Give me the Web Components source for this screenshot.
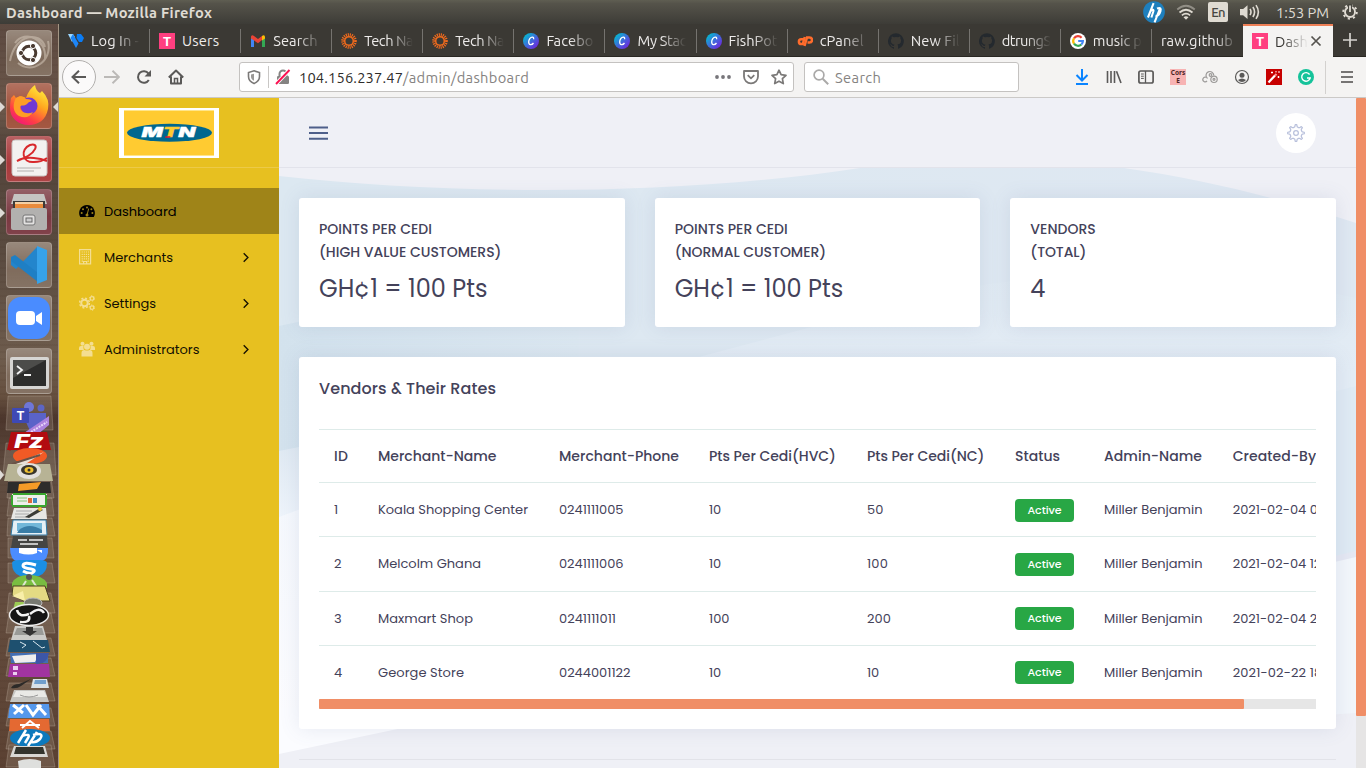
<!DOCTYPE html>
<html lang="en">
<head>
<meta charset="utf-8">
<title>Dashboard</title>
<style>
html,body{margin:0;height:100%;overflow:hidden;background:#eff0f5}
</style>
</head>
<body>
<desktop-shell></desktop-shell>
<script>
// Registers an element whose shadow root is built from a markup function.
function define(name, render) {
  customElements.define(name, class extends HTMLElement {
    connectedCallback() {
      if (this.shadowRoot) return;
      this.attachShadow({ mode: 'open' }).innerHTML = render(this);
    }
  });
}

// A run of text set to a fixed advance width through its tracking.
const runs = [];
customElements.define('text-run', class extends HTMLElement {
  connectedCallback() {
    if (this.shadowRoot) return;
    this.attachShadow({ mode: 'open' }).innerHTML =
      '<style>:host{display:inline-block;white-space:nowrap}</style><slot></slot>';
    runs.push(this);
  }
  fit() {
    const target = parseFloat(this.getAttribute('w'));
    if (!target) return;
    const n = this.textContent.length;
    this.style.letterSpacing = (target - this.getBoundingClientRect().width) / Math.max(1, n - .5) + 'px';
  }
});

// Outline of an eight-toothed gear centred in a 16-unit box.
const gearPath = (() => {
  const pts = [];
  for (let i = 0; i < 8; i++) {
    for (const [off, r] of [[-.30, 5.3], [-.16, 5.7], [-.08, 7.4], [.08, 7.4], [.16, 5.7], [.30, 5.3]]) {
      const a = i * Math.PI / 4 + off * 1.15;
      pts.push((8 + r * Math.sin(a)).toFixed(2) + ' ' + (8 - r * Math.cos(a)).toFixed(2));
    }
  }
  return 'M' + pts.join('L') + 'z';
})();

const ICONS = {
  vultr: '<path d="M0 1h5l2 3-3 5z" fill="#9bd7ff"/><path d="M2.500 5L5 1l5.500 9.500L8 15z" fill="#1d86f7"/><path d="M9 1h4l3 4-2 4h-3L8.500 5z" fill="#0a7cf5"/>',
  t: '<rect width="16" height="16" fill="#ff3f80"/><text x="8" y="12.700" text-anchor="middle" font-family="Roboto,sans-serif" font-size="13" font-weight="700" fill="#fff">T</text>',
  gmail: '<path d="M1 14V4l3 2.200V14z" fill="#4285f4"/><path d="M12 14V6.200L15 4v10z" fill="#34a853"/><path d="M1 3.500Q2 1.500 4 3l4 3 4-3v4L8 10.200 1 5.500z" fill="#ea4335"/><path d="M12 3q2-1.500 3 .5v2l-3 2z" fill="#fbbc04"/>',
  sun: '<circle cx="8" cy="8" r="4.300" fill="none" stroke="#f26b1d" stroke-width="1.500"/><circle cx="8" cy="8" r="6.300" fill="none" stroke="#f26b1d" stroke-width="3" stroke-dasharray="1.100 .88"/>',
  canva: '<defs><linearGradient id="g" x1="0" y1="0" x2="1" y2="1"><stop offset=".15" stop-color="#09b3d0"/><stop offset=".55" stop-color="#4463dc"/><stop offset="1" stop-color="#7d12dd"/></linearGradient></defs><circle cx="8" cy="8" r="8" fill="url(#g)"/><path d="M10.500 6.300q.6-1.900-1.100-2.200C7.300 4 5.700 6.700 5.700 9c0 3.300 3 3.500 4.800 1" fill="none" stroke="#fff" stroke-width="1.300"/>',
  cpanel: '<g fill="none" stroke="#ff6c2c" stroke-width="2.500"><path d="M6.500 6.300H4.300a2.400 2.400 0 0 0 0 4.800h1.500L7.800 4"/><path d="M7.500 13 10 4.500h2.500a2.400 2.400 0 0 1 0 5H10.500"/></g>',
  github: '<path fill="#24292e" d="M8 .2a8 8 0 0 0-2.500 15.600c.4 0 .5-.2.500-.4v-1.500c-2.200.5-2.700-1-2.700-1-.4-.9-.9-1.200-.9-1.200-.7-.5.100-.5.100-.5.800.1 1.200.8 1.200.8.700 1.300 1.900.9 2.300.7.100-.5.300-.9.500-1.100-1.800-.2-3.600-.9-3.600-4 0-.9.300-1.600.8-2.100-.1-.2-.4-1 .1-2.100 0 0 .7-.2 2.200.8a7.600 7.600 0 0 1 4 0c1.500-1 2.200-.8 2.200-.8.400 1.100.2 1.900.1 2.100.5.600.8 1.300.8 2.100 0 3.100-1.900 3.700-3.700 4 .3.200.6.700.6 1.500v2.200c0 .2.100.5.600.4A8 8 0 0 0 8 .2z"/>',
  google: '<circle cx="8" cy="8" r="8" fill="#fff"/><g fill="none" stroke-width="2.200"><path d="M4 5.300A4.900 4.900 0 0 1 11.600 4.700" stroke="#ea4335"/><path d="M4 5.300a5 5 0 0 0 0 5.400" stroke="#fbbc05"/><path d="M4 10.700a4.900 4.900 0 0 0 7.300.8" stroke="#34a853"/><path d="M11.300 11.500A4.800 4.800 0 0 0 12.900 8H8.200" stroke="#4285f4"/></g>',
  close: '<path d="M3.500 3.500l9 9m0-9l-9 9" stroke="#55534f" stroke-width="1.700"/>',
  plus: '<path d="M8 1v14M1 8h14" stroke="#d6d4cf" stroke-width="1.700"/>',
  back: '<path d="M15 8H1.500M8 1.700L1.500 8 8 14.300" fill="none" stroke="#5a5958" stroke-width="2"/>',
  forward: '<path d="M0 8h14M8.500 1.700L15 8l-6.500 6.300" fill="none" stroke="#bbb9b7" stroke-width="1.900"/>',
  reload: '<path d="M12.800 11A5.800 5.800 0 1 1 12.500 4.600" fill="none" stroke="#5a5958" stroke-width="2"/><path d="M15 1v6.500H8.500z" fill="#5a5958"/>',
  home: '<path d="M.8 8.500L8 1.500l7.200 7M3 7.500V14.500h10V7.500" fill="none" stroke="#5a5958" stroke-width="2" stroke-linejoin="round"/><path d="M6.500 14V9.500h3V14" fill="none" stroke="#5a5958" stroke-width="1.500"/>',
  shield: '<path d="M8 1.800l5.500 1.700V7.500c0 3.400-2.500 5.800-5.500 7-3-1.200-5.500-3.600-5.500-7v-4z" fill="none" stroke="#7b7978" stroke-width="1.600"/><path d="M8 4.700v7c-2-1-3-2.300-3-4.300v-2z" fill="#9a9896"/>',
  lock: '<path d="M4.500 8V5a3.500 3.500 0 0 1 7 0v3" fill="none" stroke="#858382" stroke-width="2"/><rect x="2" y="7" width="12" height="8" rx="1.200" fill="#858382"/><path d="M1 15L14.500 1" stroke="#fff" stroke-width="3.800"/><path d="M1 15L14.500 1" stroke="#fb1151" stroke-width="1.900"/>',
  dots: '<g fill="#77757a"><circle cx="2" cy="8" r="1.900"/><circle cx="8" cy="8" r="1.900"/><circle cx="14" cy="8" r="1.900"/></g>',
  pocket: '<path d="M1 2h14v5.500a7 6.800 0 0 1-14 0z" fill="none" stroke="#7b7978" stroke-width="1.800" stroke-linejoin="round"/><path d="M4.700 6.200L8 9.300l3.300-3.100" fill="none" stroke="#7b7978" stroke-width="1.800"/>',
  star: '<path d="M8 1.200l2.100 4.500 4.900.6-3.600 3.400.9 4.900L8 12.200l-4.300 2.400.9-4.900L1 6.300l4.900-.6z" fill="none" stroke="#7b7978" stroke-width="1.700" stroke-linejoin="round"/>',
  search: '<circle cx="6" cy="6" r="4.900" fill="none" stroke="#aaa9a8" stroke-width="1.700"/><path d="M9.700 9.700l5.500 5.500" stroke="#aaa9a8" stroke-width="2"/>',
  download: '<path d="M8 0v11M2.500 6L8 11.500 13.500 6M2 15h12" fill="none" stroke="#0a84ff" stroke-width="2"/>',
  library: '<path d="M1.500 2v12M5 2v12M8.500 2v12M10.500 2.300L15 14" fill="none" stroke="#5a5958" stroke-width="1.600"/>',
  sidebar: '<rect x=".9" y="2" width="14.200" height="12" rx="1.800" fill="none" stroke="#5a5958" stroke-width="1.700"/><path d="M7.500 2v12" stroke="#5a5958" stroke-width="1.300"/><path d="M3 5h2.800M3 7.200h2.800M3 9.400h2.800" stroke="#5a5958"/>',
  rings: '<g fill="none" stroke="#9c9a99" stroke-width="1.200"><path d="M4 8.300a2.300 2.300 0 1 0 1 3.500"/><path d="M5.500 9.500a3.900 3.900 0 1 1 6.300-3"/><circle cx="8.500" cy="6" r="1.300"/><circle cx="12" cy="10.300" r="3.200"/><circle cx="12" cy="10.300" r="1"/></g>',
  account: '<circle cx="8" cy="8" r="6.500" fill="none" stroke="#5a5958" stroke-width="1.200"/><circle cx="8" cy="6.300" r="2.500" fill="#5a5958"/><path d="M4 11q4-3 8 0-1.500 2-4 2T4 11z" fill="#5a5958"/>',
  wand: '<rect width="16" height="16" fill="#c70000"/><path d="M2.500 13.500L9 6.500" stroke="#fff" stroke-width="2.200"/><path d="M9 6.500l1.500-1.500" stroke="#f99" stroke-width="2.200"/><path d="M5 3.500h2M6 2.500v2M12 3h2M10 2v1.500M12.500 7v2M11.500 8h2" stroke="#fff"/>',
  grammarly: '<circle cx="8" cy="8" r="8" fill="#15c39a"/><path d="M11.600 5.500A4.300 4.300 0 1 0 12.200 9H9" fill="none" stroke="#fff" stroke-width="1.400"/>',
  burger: '<path d="M2 3h12M2 8h12M2 13h12" stroke="#4c4b4a" stroke-width="1.700"/>',
  hp: '<circle cx="8" cy="8" r="7.900" fill="#1e7fbd"/><path d="M7.400 1.500L3.300 12M5.300 7.200q2.500-1.700 1.900.4L5.800 12M12.300 4.800L8.100 15.500M9.900 5.500q3.500-1.400 2.500 2-1.200 4-3.600 3.300" transform="translate(.3 0)" fill="none" stroke="#fff" stroke-width="1.500"/>',
  wifi: '<g fill="none" stroke="#dfdbd2" stroke-width="1.400"><path d="M1 6q7-6 14 0" opacity=".45"/><path d="M2.800 8.400q5.200-4.400 10.400 0"/><path d="M4.700 10.700q3.300-2.700 6.600 0"/></g><path d="M6 12.200q2-1.500 4 0l-2 2z" fill="#dfdbd2"/>',
  speaker: '<path d="M0 5.500h2.500L6 2.500v11L2.500 10.500H0z" fill="#dfdbd2"/><path d="M8 5.500q1.600 2.500 0 5M10.300 4q2.700 4 0 8M12.800 2.500q3.800 5.500 0 11" fill="none" stroke="#dfdbd2" stroke-width="1.300"/>',
  power: '<circle cx="8" cy="8" r="5" fill="none" stroke="#dfdbd2" stroke-width="1.900"/><circle cx="8" cy="8" r="6.800" fill="none" stroke="#dfdbd2" stroke-width="1.900" stroke-dasharray="2.200 3.140"/><path d="M8 0v8" stroke="#484740" stroke-width="4"/><path d="M8 1.500v6.500" stroke="#dfdbd2" stroke-width="1.800"/>',
  gauge: '<path d="M8 2a8 8 0 0 0-6.800 12h13.600A8 8 0 0 0 8 2z" fill="#000"/><g fill="#9f8418"><circle cx="8" cy="4.500" r="1"/><circle cx="4" cy="6.200" r="1"/><circle cx="12.400" cy="6.200" r="1"/><circle cx="2.700" cy="10" r="1"/><circle cx="13.400" cy="10" r="1"/></g><path d="M9.700 5.500L8.300 11" stroke="#9f8418"/><circle cx="8" cy="12" r="1.500" fill="#9f8418"/>',
  building: '<path d="M.6.600h11v14.300H.6z" fill="none" stroke="#f4de91" stroke-width="1.200"/><path d="M2.600 3h7.500M2.600 5.300h7.500M2.600 7.600h7.500M2.600 9.900h7.500" stroke="#f4de91" stroke-width="1.200" stroke-dasharray="1.200 .9"/><path d="M2.600 12.200h1.500M8.500 12.200h1.500M4.600 15v-2.500h3V15" fill="none" stroke="#f4de91" stroke-width="1.200"/>',
  cogs: '<g fill="none" stroke="#f4de91"><circle cx="5.500" cy="8" r="3.300" stroke-width="2"/><circle cx="5.500" cy="8" r="4.900" stroke-width="1.500" stroke-dasharray="2 1.850"/><circle cx="13" cy="3.400" r="1.800" stroke-width="1.200"/><circle cx="13" cy="3.400" r="2.600" stroke-width="1" stroke-dasharray="1.300 1.420"/><circle cx="13" cy="12.600" r="1.800" stroke-width="1.200"/><circle cx="13" cy="12.600" r="2.600" stroke-width="1" stroke-dasharray="1.300 1.420"/></g>',
  users: '<g fill="#f4de91"><circle cx="3.500" cy="2.700" r="2"/><circle cx="12.500" cy="2.700" r="2"/><path d="M0 9V7q0-2 2-2h2.600Q4 7 5 9zM16 9V7q0-2-2-2h-2.600q.6 2-.4 4z"/><circle cx="8" cy="5.700" r="3"/><path d="M2.500 15.500V12q0-3 3-3 2.500 1.200 5 0 3 0 3 3v3.500z"/></g>',
  chevron: '<path d="M5.700 4.300L9.900 8.500l-4.200 4.200" fill="none" stroke="#1a1300" stroke-width="1.400"/>',
  lines: '<path d="M0 3.800h16M0 8.500h16M0 13.200h16" stroke="#4e5f8a" stroke-width="1.700"/>',
  gear: `<path d="${gearPath}" fill="none" stroke="#b9c1dc" stroke-width="1.100" stroke-linejoin="round"/><circle cx="8" cy="8" r="2.100" fill="none" stroke="#b9c1dc" stroke-width="1.100"/>`
};
define('ui-icon', el => {
  const s = el.getAttribute('size') || 16;
  return `<style>:host{display:block;flex:none;width:${s}px;height:${s}px}svg{display:block}</style>
  <svg width="${s}" height="${s}" viewBox="0 0 16 16">${ICONS[el.getAttribute('name')]}</svg>`;
});

/* ---------- desktop ---------- */
define('desktop-shell', () => `<style>
:host{display:grid;grid-template:24px 1fr/59px 1fr;width:1366px;height:768px;overflow:hidden;font-family:Ubuntu,"Noto Sans",sans-serif}
system-bar{grid-column:1/3}
</style><system-bar></system-bar><app-launcher></app-launcher><browser-window></browser-window>`);

define('system-bar', () => `<style>
:host{display:flex;align-items:center;background:linear-gradient(#5f5e52,#55534a 15%,#3d3c37);color:#dfdbd2;font-size:14.667px;padding:0 8px 0 6px;box-sizing:border-box}
.title{font-weight:700;flex:none}
.gap{flex:1}
.en{width:20px;height:20px;border-radius:2px;background:#dfdbd2;color:#454440;text-align:center;line-height:21px;margin:0 12px 0 12px;font-size:13px;font-weight:500}
.t{margin:0 13px 0 16px}
</style><text-run class="title" w="206">Dashboard — Mozilla Firefox</text-run><span class="gap"></span>
<ui-icon name="hp" size="22"></ui-icon><ui-icon name="wifi" size="20" style="margin-left:11px"></ui-icon>
<span class="en"><text-run w="14">En</text-run></span><ui-icon name="speaker" size="20"></ui-icon>
<text-run class="t" w="53">1:53 PM</text-run><ui-icon name="power" size="16"></ui-icon>`);

define('launcher-tile', el => `<style>
:host{display:grid;place-items:center;width:46px;height:46px;flex:none;border-radius:4px;box-sizing:border-box;border:1px solid #ffffff30;position:relative;background:linear-gradient(#ffffff38,#ffffff08 60%,#ffffff14),${el.getAttribute('tint') || '#7b6757'}}
i{position:absolute;top:18px;border:5px solid transparent}
.l{left:-7px;border-right:0;border-left-color:#dedad6}.r{right:-7px;border-left:0;border-right-color:#dedad6}
svg{display:block}
</style><slot></slot>${el.hasAttribute('running') ? '<i class="l"></i>' : ''}${el.hasAttribute('focused') ? '<i class="r"></i>' : ''}`);

define('app-launcher', () => `<style>
:host{display:flex;flex-direction:column;gap:7px;padding:6px 0 0 6px;box-sizing:border-box;width:59px;border-right:1px solid #a39584;overflow:hidden;background:repeating-linear-gradient(#0000 0 5px,#3b241812 5px 7px),linear-gradient(#5d4a41,#6b574a 12%,#54453c 16%,#594a3f 30%,#6e5c4d 45%,#66503f 50%,#4c362c 53%,#5f4c40 60%,#634c3e 78%,#5b4132)}
.fold{margin:-8px 0 0 -6px;display:block;flex:none}
</style>
<launcher-tile><svg width="44" height="44"><path d="M3 30C8 2 34 0 38 16M41 10c5 20-16 34-30 22M8 12C18-2 40 8 38 28" fill="none" stroke="#d4c7b8" stroke-opacity=".55" stroke-width="2"/><circle cx="22" cy="22" r="12.500" fill="#fff"/><circle cx="22" cy="22" r="6.800" fill="none" stroke="#4a3b32" stroke-width="3"/><g fill="#4a3b32" stroke="#fff"><circle cx="14" cy="22" r="2.600"/><circle cx="26" cy="15" r="2.600"/><circle cx="26" cy="29" r="2.600"/></g></svg></launcher-tile>
<launcher-tile tint="#9c4a33" running focused><svg width="44" height="44"><defs><linearGradient id="f" x1=".8" y1="0" x2=".2" y2="1"><stop stop-color="#fff23f"/><stop offset=".4" stop-color="#ffa51f"/><stop offset=".75" stop-color="#ff3d46"/><stop offset="1" stop-color="#ee1281"/></linearGradient></defs><path d="M4 14l3-3 2 3 4-2 6 2q3-9 9-13 1 6 5 8l2-2q8 8 6 18C39 36 31 41 22 41 11 41 3 34 3 24q0-5 1-10z" fill="url(#f)"/><circle cx="22" cy="22" r="8.500" fill="#7138d4"/><path d="M9 14q7-4 10 1 5 0 6 2-4 1-5 3c-3 3-6 0-7 3 0 5 7 8 13 5q-5 8-14 4C4 27 7 17 9 14z" fill="#ff9d25"/></svg></launcher-tile>
<launcher-tile tint="#a63335" running><svg width="44" height="44"><rect x="5" y="3" width="35" height="36" rx="3" fill="#f3f1f0" stroke="#c9c5c3"/><path d="M10 24C32 16 32 5 23 8c-10 4-8 18 4 17 6 0 10-2 13-4M10 24c10-6 25-2 30 0" fill="none" stroke="#d8282c" stroke-width="2"/><path d="M10 31h24M10 34h17" stroke="#c9c5c3" stroke-width="1.500"/></svg></launcher-tile>
<launcher-tile tint="#76323b" running><svg width="44" height="44"><path d="M7 4h30l3 10H4z" fill="#c5c4c2"/><rect x="6" y="11" width="32" height="10" fill="#3c3b39"/><path d="M8 13h28v6H8z" fill="#e98b3c"/><path d="M8 13h28" stroke="#f4d0a5" stroke-width="2"/><rect x="4" y="18" width="36" height="22" rx="2" fill="#b2b1af"/><rect x="16" y="25" width="12" height="10" rx="2" fill="#e2e1e0" stroke="#777"/><rect x="19" y="28" width="6" height="4" fill="#ccc" stroke="#666"/></svg></launcher-tile>
<launcher-tile><svg width="44" height="44"><path d="M30 4L9 26l-5-4v-4l3-2 24 18z" fill="#2385cc"/><path d="M4 14l4-2 23 18v9L4 18z" fill="#1f7fc4"/><path d="M30 3l10 4v30l-10 4z" fill="#36a2ea"/></svg></launcher-tile>
<launcher-tile><svg width="44" height="44"><rect x="1" y="1" width="42" height="42" rx="13" fill="#4a8cff"/><rect x="9" y="15" width="19" height="14" rx="4" fill="#fff"/><path d="M29 20l6-4v13l-6-4z" fill="#fff"/></svg></launcher-tile>
<launcher-tile><svg width="44" height="44"><rect x="3" y="8" width="39" height="32" rx="2" fill="#d6d5d3"/><rect x="6" y="11" width="33" height="26" fill="#2d2d2c"/><path d="M6 11h33L6 29z" fill="#4c4c4a"/><path d="M10 17l5 4-5 4M17 26h7" fill="none" stroke="#f2f2f2" stroke-width="1.800"/></svg></launcher-tile>
<svg class="fold" width="58" height="376">
<g fill="#b5a797" fill-opacity=".22" stroke="#cfc3b5" stroke-opacity=".28"><path d="M8 3h43l2 34H6zM6 50h48l2 32H3zM9 85h42l3 20H7zM9 105h43l2 18H7zM8 125h44l3 18H7zM8 145h44l2 20H8zM8 170h44l3 20H8zM9 200h42l4 20H7zM9 220h42l4 20H6zM9 245h42l4 18H6zM9 265h42l4 18H6zM9 290h42l4 18H6zM9 315h42l4 18H6zM9 338h42l4 18H6zM9 352h42l4 22H6z"/></g>
<circle cx="29" cy="14" r="5" fill="#6e76d8"/><circle cx="41" cy="15" r="3.500" fill="#5c65c4"/><path d="M22 20h24v14q-6 8-16 4z" fill="#5a63c8"/><rect x="12" y="15" width="17" height="15" rx="1" fill="#3e49b5"/><text x="20.500" y="27" text-anchor="middle" font-family="Inter,sans-serif" font-size="12" font-weight="700" fill="#fff">T</text><path d="M21 42l28-19v9l-11 9z" fill="#ad83dd"/><path d="M31 39l16-10" stroke="#e8d8fa" stroke-width="2" stroke-dasharray="2 1"/>
<path d="M11 39h36l4 18H7z" fill="#b20c10"/><path d="M8 56q2 3 4 0t4 0 4 0 4 0 4 0 4 0 4 0 4 0 4 0 4 0" fill="#b20c10"/><text x="14" y="55" font-family="Inter,sans-serif" font-size="19" font-weight="800" font-style="italic" fill="#fff" textLength="30" lengthAdjust="spacingAndGlyphs">Fz</text>
<ellipse cx="30" cy="63" rx="17" ry="8" fill="#f15a25"/><path d="M10 73l34-14-20 13z" fill="#e8e0d8"/><path d="M12 71l28-9" stroke="#695347" stroke-width="2"/>
<path d="M8 71h42l3 17H4z" fill="#b7b395"/><ellipse cx="29" cy="78" rx="12" ry="8" fill="#e3e1de"/><ellipse cx="29" cy="77" rx="8" ry="5" fill="#38352c"/><ellipse cx="29" cy="77" rx="4.500" ry="3" fill="#efc132"/><circle cx="29" cy="77" r="1.500" fill="#333"/><path d="M0 77l4 5-4 5z" fill="#dedad6"/>
<path d="M8 89h42l1 11H7z" fill="#2d2c2b"/><path d="M19 91l22-2-4 7-19 2z" fill="#f49b27"/>
<path d="M12 101h35l-1 12H12z" fill="#eeefeb"/><path d="M13 101h33M12 102v10M46 102v10M12 113h34" stroke="#39a52e" stroke-width="2"/><path d="M17 105h10M17 108h10" stroke="#85c77a"/><path d="M28 105h4v5h-4z" fill="#df6838"/><path d="M33 105h4v5h-4z" fill="#408dc4"/>
<path d="M14 115h32l1 11H11z" fill="#e7e7e4"/><path d="M16 118h16M15 121h14M15 124h12" stroke="#aaa"/><path d="M25 124l15-9 3 2-14 8z" fill="#3b3b36"/><circle cx="40" cy="116" r="2" fill="#ecc739"/>
<path d="M13 127h33l1 15H11z" fill="#e5f0f6" stroke="#2f79a6"/><path d="M17 130h25v8H17z" fill="#72b7d9"/><path d="M19 137q10-8 23 0v3H17z" fill="#397da7"/>
<path d="M13 143h34l1 12H11z" fill="#454543"/><path d="M18 147h9M29 147h14M20 151h18" stroke="#eee" stroke-width="1.300"/>
<path d="M10 155h38q1 12-8 14H18q-8-2-8-14z" fill="#4c8dff"/><path d="M19 155h18v5q-8 3-18 0z" fill="#fff"/><path d="M37 157h5v3z" fill="#fff"/>
<path d="M12 170q0-3 8-3h18q9 0 9 3 0 10-8 13H20q-8-3-8-13z" fill="#1b8fe3"/><path d="M36 172q-13-4-13 1 0 2 8 3 6 1 1 4-4 1-9-2" fill="none" stroke="#fff" stroke-width="3"/>
<path d="M12 190q4-8 17-8t18 8v5H12z" fill="#79bd41"/><path d="M21 196l5-8M38 196l-6-9" stroke="#dde9cf" stroke-width="2"/><circle cx="29" cy="184" r="3" fill="#555"/>
<path d="M13 193h32l5 15H24l-12-6z" fill="#e4da83" stroke="#483f20"/><path d="M12 203l11-5 2 10z" fill="#f8eea8"/>
<path d="M15 209h12v8H13z" fill="#9bcb55"/><ellipse cx="33" cy="210" rx="9" ry="5" fill="#777971" stroke="#bbb"/>
<ellipse cx="29" cy="222" rx="19.500" ry="10.500" fill="#141414" stroke="#eee" stroke-width="1.500"/><path d="M29 221q-10 4-12-4M30 221q10-8 14-1M29 223q2 7-9 6" fill="none" stroke="#f3f3f3" stroke-width="2.500"/>
<path d="M15 233h28l4 14H11z" fill="#cbcbc8"/><path d="M17 235h25l2 7H14z" fill="#999a97"/><path d="M26 234h7v4h4l-7 5-8-5h4z" fill="#333"/>
<path d="M10 247h38l2 12H8z" fill="#1e506f"/><path d="M20 249l6 3-4 3M33 248l9 7 3-1" stroke="#dae8ef" fill="none"/>
<path d="M10 260h38v10H11z" fill="#416eb4"/><path d="M12 263l27-2-4 8-20 1z" fill="#eee"/><path d="M36 260h13q-2 12-13 11z" fill="#3c56a8"/>
<path d="M10 271h39l1 13H8z" fill="#a134a0"/><path d="M13 273h5v4h-5zM13 279h4v3h-4z" fill="#eccff0"/>
<path d="M33 286h14l2 9H31z" fill="#d9e1e8"/><path d="M35 287h11v4H34z" fill="#719fcd"/><path d="M11 295q2-4 8-4l12-5-10 7q-4 3-10 2z" fill="#2c2a28"/>
<path d="M14 297h31l4 12H10z" fill="#c6c6c3"/><path d="M16 298h28l3 6H13z" fill="#e9e9e6"/><path d="M20 302q9 4 18 0" stroke="#999" fill="none"/>
<path d="M10 311h39l1 14H8z" fill="#5598ec"/><path d="M13 312l10 8M24 312l-10 9M26 312l7 10 8-10M37 312l9 10" stroke="#fff" fill="none" stroke-width="3"/>
<path d="M10 326h39l1 12H9z" fill="#e46932"/><path d="M22 335l8-7 9 7M20 332h20" stroke="#fff" fill="none" stroke-width="2"/>
<ellipse cx="30" cy="345" rx="20" ry="9" fill="#0c79bd"/><path d="M26 337l-8 13M22 343q9-3 6 2l-3 5M37 339l-9 14M33 342q12-3 7 4-4 4-9 3" stroke="#fff" stroke-width="2.500" fill="none"/>
<path d="M14 353h31l3 11H10z" fill="#d8d7d3"/><path d="M16 354h27l2 7H14z" fill="#33342d"/>
<path d="M18 368q12-4 23 0v9H19z" fill="#dedfdd"/>
</svg>`);

/* ---------- browser chrome ---------- */
define('browser-tab', el => `<style>
:host{display:flex;align-items:center;gap:7px;box-sizing:border-box;flex:none;width:91.080px;padding:0 0 0 9px;position:relative;color:#eeeceb;font-size:14.667px}
:host::after{content:"";position:absolute;right:0;top:5px;height:24px;width:1px;background:#75736f}
:host([last])::after,:host([active])::after{display:none}
:host([active]){width:90px;background:#f4f3f2;border-top:2px solid #ee8057;padding-bottom:1px;color:#33312e}
.lbl{flex:none;width:50px;overflow:hidden;white-space:nowrap;-webkit-mask-image:linear-gradient(90deg,#000 48%,#0000 98%)}
:host([solid]) .lbl{-webkit-mask-image:none}
:host([wide]) .lbl{width:73px;-webkit-mask-image:linear-gradient(90deg,#000 75%,#0000 105%)}
:host([active]) .lbl{width:35px;-webkit-mask-image:linear-gradient(90deg,#000 20%,#0000 95%)}
ui-icon.x{margin-left:-9px}
</style>${el.getAttribute('icon') ? `<ui-icon name="${el.getAttribute('icon')}"></ui-icon>` : ''}
<span class="lbl"><text-run w="${el.getAttribute('w')}">${el.getAttribute('label')}</text-run></span>
${el.hasAttribute('active') ? '<ui-icon class="x" name="close"></ui-icon>' : ''}`);

define('tab-strip', () => {
  const tabs = [['vultr','Log In -',48],['t','Users',37,'solid'],['gmail','Search',44.5],['sun','Tech Na',49],['sun','Tech Na',49],['canva','Facebo',47],['canva','My Stac',49],['canva','FishPot',49],['cpanel','cPanel',44],['github','New Fil',49],['github','dtrungS',49],['google','music p',49],['','raw.github',72,'wide last'],['t','Dash',33,'active']];
  return `<style>:host{display:flex;height:33px;background:#3b3934;box-shadow:inset 0 -1px #292722}.add{margin:8px 0 0 9px}</style>` +
    tabs.map(([i, l, w, f]) => `<browser-tab icon="${i}" label="${l}" w="${w}" ${f || ''}></browser-tab>`).join('') +
    '<ui-icon class="add" name="plus"></ui-icon>';
});

define('nav-bar', () => `<style>
:host{display:flex;align-items:center;height:41px;box-sizing:border-box;background:#f4f3f2;border-bottom:1px solid #cbc9c7;padding-left:3px;font-size:14.667px;color:#2e2c2a}
.back{display:grid;place-items:center;width:34px;height:34px;box-sizing:border-box;border:1px solid #b1afad;border-radius:50%;background:#fbfafa}
.btns{display:flex;gap:16px;margin:0 55px 0 8px}
.box{display:flex;align-items:center;height:30px;box-sizing:border-box;border:1px solid #c4c2c0;border-radius:3px;background:#fff}
.box text-run{padding-top:1px}
.url{width:555px;padding:0 6px}
.sep{width:1px;height:22px;background:#c9c7c5;margin:0 6px}
.path{color:#858381}.grow{flex:1}
.search{width:215px;margin-left:10px;padding-left:8px;color:#858381}
.tools{display:flex;gap:16px;margin-left:55px}
.cors{width:16px;height:16px;background:#f7b3b3;color:#4b2224;font:700 6.500px/7.500px "Noto Sans",sans-serif;text-align:center}
.line{width:1px;height:33px;background:#d3d1cf;margin:0 13px 0 11px}
</style>
<span class="back"><ui-icon name="back"></ui-icon></span>
<div class="btns"><ui-icon name="forward"></ui-icon><ui-icon name="reload"></ui-icon><ui-icon name="home"></ui-icon></div>
<div class="box url"><ui-icon name="shield"></ui-icon><span class="sep"></span><ui-icon name="lock"></ui-icon><text-run w="104" style="margin-left:8px">104.156.237.47</text-run><text-run class="path" w="126">/admin/dashboard</text-run><span class="grow"></span><ui-icon name="dots"></ui-icon><ui-icon name="pocket" style="margin:0 12px"></ui-icon><ui-icon name="star"></ui-icon></div>
<div class="box search"><ui-icon name="search"></ui-icon><text-run w="46" style="margin-left:6px">Search</text-run></div>
<div class="tools"><ui-icon name="download"></ui-icon><ui-icon name="library"></ui-icon><ui-icon name="sidebar"></ui-icon><span class="cors">Cors<br>E</span><ui-icon name="rings"></ui-icon><ui-icon name="account"></ui-icon><ui-icon name="wand"></ui-icon><ui-icon name="grammarly"></ui-icon></div>
<span class="line"></span><ui-icon name="burger"></ui-icon>`);

define('browser-window', () => `<style>
:host{display:flex;flex-direction:column;min-width:0}
.page{display:flex;flex:1;min-height:0;font-family:Poppins,Inter,sans-serif;font-feature-settings:"cv11","ss03";color:#44425a}
dashboard-main{flex:1}
.scroll{width:10px;background:#e6e5e5}.scroll i{display:block;height:618px;background:#f08e66;border-radius:1px}
</style><tab-strip></tab-strip><nav-bar></nav-bar><div class="page"><side-menu></side-menu><dashboard-main></dashboard-main><div class="scroll"><i></i></div></div>`);

/* ---------- dashboard page ---------- */
define('brand-logo', () => `<style>:host{display:grid;place-items:center;width:100px;height:50px;background:#fff}svg{display:block}</style>
<svg width="90" height="46"><rect width="90" height="46" fill="#ffe58a"/><rect y="1" width="90" height="44" fill="#ffcb31"/><ellipse cx="45.500" cy="22.800" rx="42.500" ry="9" fill="#00678f"/><text x="17.500" y="27.300" font-family="Inter,sans-serif" font-size="12.500" font-weight="900" font-style="italic" fill="#fff" stroke="#fff" stroke-width=".3" textLength="54" lengthAdjust="spacingAndGlyphs">M<tspan fill="#ffcb31" stroke="#ffcb31">T</tspan>N</text><path d="M41.500 26.300h5l-.5 1.500h-5z" fill="#e3122e"/></svg>`);

define('menu-item', el => `<style>
:host{display:flex;align-items:center;height:46px;padding:0 25px 0 20px;box-sizing:border-box;font-size:13px;color:#120f02}
:host([active]){background:#9f8418;color:#000}
.name{flex:1;padding:2px 0 0 9px}
</style><ui-icon name="${el.getAttribute('icon')}"></ui-icon><div class="name"><text-run w="${el.getAttribute('w')}">${el.getAttribute('label')}</text-run></div>${el.hasAttribute('active') ? '' : '<ui-icon name="chevron"></ui-icon>'}`);

define('side-menu', () => `<style>
:host{display:block;width:220px;background:#e7c020}
.brand{height:69px;border-bottom:1px solid #ecca48;display:grid;place-items:center}
nav{padding-top:20px}
</style><div class="brand"><brand-logo></brand-logo></div><nav>
<menu-item active icon="gauge" label="Dashboard" w="72.500"></menu-item>
<menu-item icon="building" label="Merchants" w="69"></menu-item>
<menu-item icon="cogs" label="Settings" w="52"></menu-item>
<menu-item icon="users" label="Administrators" w="95.500"></menu-item></nav>`);

define('stat-card', () => `<style>
:host{display:block;flex:1;height:129px;box-sizing:border-box;padding:20px 20px;background:#fff;border-radius:3px;box-shadow:0 0 20px rgba(82,97,145,.13)}
.cap{font-size:14px;font-weight:500;line-height:23px}
.val{font-size:24px;line-height:30px;margin-top:10px}
</style><div class="cap"><slot name="a"></slot><br><slot name="b"></slot></div><div class="val"><slot></slot></div>`);

define('vendor-table', () => {
  const run = (t, w) => `<div><text-run w="${w}">${t}</text-run></div>`;
  const head = [['ID',14],['Merchant-Name',118.5],['Merchant-Phone',120],['Pts Per Cedi(HVC)',127],['Pts Per Cedi(NC)',117.5],['Status',45],['Admin-Name',98],['Created-By',83.5]];
  const rows = [
    [['1',5],['Koala Shopping Center',150],['0241111005',64.5],['10',12],['50',16.5],'2021-02-04 08:45:12'],
    [['2',8],['Melcolm Ghana',103],['0241111006',64.5],['10',12],['100',21],'2021-02-04 12:10:33'],
    [['3',8],['Maxmart Shop',95],['0241111011',57],['100',20.5],['200',24],'2021-02-04 20:31:08'],
    [['4',8],['George Store',86],['0244001122',71.5],['10',12],['10',12],'2021-02-22 18:02:51']];
  const date = t => `<div><text-run w="77">${t.slice(0, 10)}&nbsp;</text-run>${t.slice(11)}</div>`;
  return `<style>
:host{display:block;overflow:hidden}
.r{display:grid;grid-template-columns:44px 181px 150px 158px 148px 89px 128.700px 200px;height:54.250px;box-sizing:border-box;border-top:1px solid #deebe9;align-items:center;font-size:13px;width:1100px;padding-top:1px}
.r>div{padding-left:15px;white-space:nowrap}
.h{height:53px;font-size:14px;font-weight:500;padding-top:1px}
.b{display:grid;place-items:center;width:59px;height:23px;border-radius:4px;background:#28a745;color:#fff;font-size:11px;font-weight:500}
.bar{height:10px;background:#e6e6e6}.bar i{display:block;width:925px;height:10px;background:#f08e66;border-radius:1px}
</style><div class="r h">${head.map(c => run(...c)).join('')}</div>` +
  rows.map(r => `<div class="r">${r.slice(0, 5).map(c => run(...c)).join('')}<div><span class="b"><text-run w="34">Active</text-run></span></div>${run('Miller Benjamin', 98.5)}${date(r[5])}</div>`).join('') +
  '<div class="bar"><i></i></div>';
});

define('dashboard-main', () => `<style>
:host{display:flex;flex-direction:column;position:relative;overflow:hidden;background:#eff0f6}
svg.bg{position:absolute;left:0;top:70px}
header{position:relative;height:69px;flex:none;border-bottom:1px solid #e2e3eb;display:flex;align-items:center;justify-content:space-between;padding:0 40px 0 30px}
.gear{width:40px;height:40px;border-radius:50%;background:#fff;display:grid;place-items:center}
main{position:relative;padding:30px 20px 0}
.cards{display:flex;gap:30px}
.panel{margin-top:30px;height:372px;box-sizing:border-box;padding:20px 20px 0;background:#fff;border-radius:3px;box-shadow:0 0 20px rgba(82,97,145,.13)}
h2{margin:0 0 29px;font-size:16px;font-weight:500;line-height:23px}
footer{margin-top:30px;border-top:1px solid #e2e3e9}
</style>
<svg class="bg" width="1077" height="600">
<defs><linearGradient id="a" x1="0" x2="1"><stop stop-color="#dce8f1"/><stop offset="1" stop-color="#dfe8f2"/></linearGradient>
<linearGradient id="b" x1="0" y1="0" x2="0" y2="1"><stop stop-color="#dfe9f2"/><stop offset="1" stop-color="#eef4fb"/></linearGradient>
<linearGradient id="c" x1="0" y1="0" x2="0" y2="1"><stop stop-color="#f5f8fd"/><stop offset="1" stop-color="#fdfdff"/></linearGradient>
<linearGradient id="e" x1="0" x2="1"><stop stop-color="#d3e2ed"/><stop offset=".15" stop-color="#d4e3ee"/><stop offset="1" stop-color="#dce8f1"/></linearGradient>
<linearGradient id="k" x1="0" x2="0" y1="0" y2="1"><stop stop-color="#dfe9f2"/><stop offset=".2" stop-color="#e3ecf5"/><stop offset="1" stop-color="#e6edf6"/></linearGradient></defs>
<path d="M0 8C170 27 390 29 581 0H845C930 12 1010 33 1077 55V560H0z" fill="url(#a)"/>
<path d="M0 158Q150 125 300 120V283H0z" fill="url(#e)"/>
<path d="M420 189L540 157Q800 70 1077 130V600H400V195z" fill="url(#k)"/>
<path d="M0 283L25 278V350H0z" fill="url(#b)"/>
<path d="M1030 230L1077 218V392H1030z" fill="#dfeaf4"/>
<path d="M0 349L30 338V600H0z" fill="url(#c)"/>
<path d="M1030 400L1077 387V560H1030z" fill="#f2f6fb"/><path d="M1030 394L1077 383V389L1030 400z" fill="#e5e8f3"/>
<path d="M0 540L200 540 0 600z" fill="#fbfcff"/>
<path d="M0 586L128 559 900 556 1077 545V600H0z" fill="#eff0f6"/>
</svg>
<header><ui-icon name="lines" size="19"></ui-icon><span class="gear"><ui-icon name="gear" size="18"></ui-icon></span></header>
<main><div class="cards">
<stat-card><text-run slot="a" w="113">POINTS PER CEDI</text-run><text-run slot="b" w="182.500">(HIGH VALUE CUSTOMERS)</text-run><text-run w="168.500">GH¢1 = 100 Pts</text-run></stat-card>
<stat-card><text-run slot="a" w="113">POINTS PER CEDI</text-run><text-run slot="b" w="151.500">(NORMAL CUSTOMER)</text-run><text-run w="168.500">GH¢1 = 100 Pts</text-run></stat-card>
<stat-card><text-run slot="a" w="65.500">VENDORS</text-run><text-run slot="b" w="56">(TOTAL)</text-run><text-run w="15">4</text-run></stat-card></div>
<div class="panel"><h2><text-run w="177">Vendors &amp; Their Rates</text-run></h2><vendor-table></vendor-table></div>
<footer></footer></main>`);

runs.forEach(r => r.fit());
</script>
</body>
</html>
